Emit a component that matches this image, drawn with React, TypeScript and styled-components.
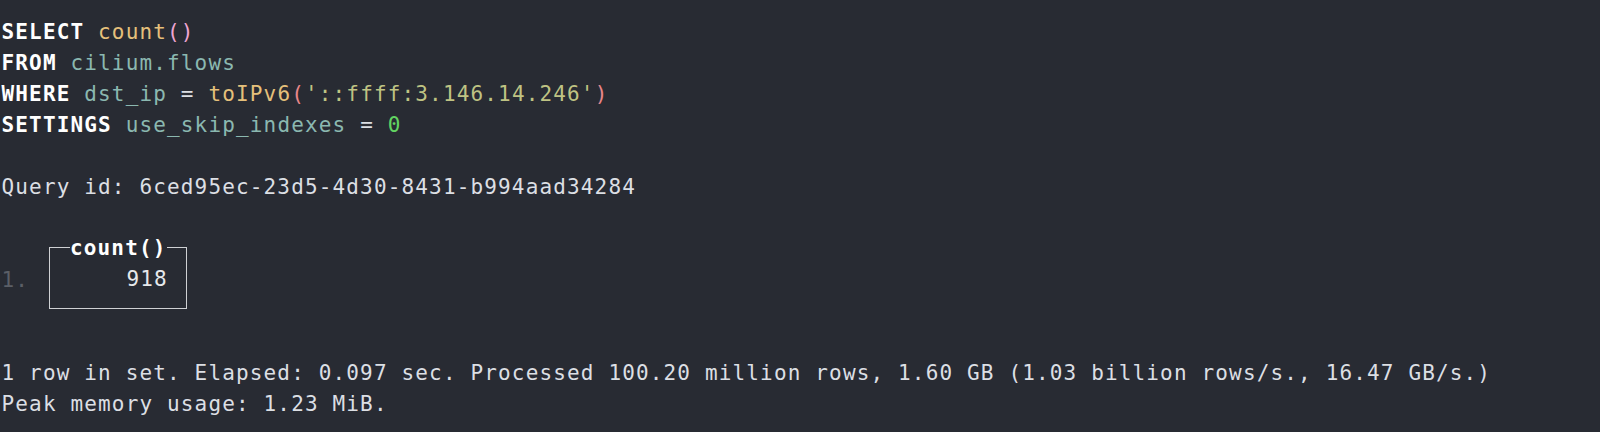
import React from "react";
import styled, { createGlobalStyle } from "styled-components";

const BG = "#282b33";
const CELL = 13.8;
const LINE = 31;

const Global = createGlobalStyle`
  html, body { margin: 0; padding: 0; background: ${BG}; }
  body { width: 1600px; height: 432px; overflow: hidden; }
`;

const Terminal = styled.div`
  box-sizing: border-box;
  width: 1600px;
  height: 432px;
  background: ${BG};
  padding: 16.5px 0 0 1.5px;
  font-family: "DejaVu Sans Mono", "Liberation Mono", monospace;
  font-size: 21px;
  letter-spacing: ${CELL - 12.65}px;
  color: #dcdfe4;
  display: flex;
  flex-direction: column;
`;

const Line = styled.div`
  height: ${LINE}px;
  line-height: ${LINE}px;
  white-space: pre;
`;

type Tone = "kw" | "fn" | "pink" | "red" | "id" | "str" | "num" | "plain" | "dim";

const toneColor: Record<Tone, string> = {
  kw: "#ffffff",
  fn: "#e5c07b",
  pink: "#eea5d2",
  red: "#e8868a",
  id: "#8bb8b0",
  str: "#bfc383",
  num: "#62d462",
  plain: "#dcdfe4",
  dim: "#5b5f67",
};

const Tok = styled.span<{ $tone: Tone }>`
  color: ${(p) => toneColor[p.$tone]};
  font-weight: ${(p) => (p.$tone === "kw" ? 700 : 400)};
`;

const Result = styled.div`
  display: grid;
  grid-template-columns: ${CELL * 3}px auto;
  grid-template-rows: repeat(3, ${LINE}px);
  justify-content: start;
`;

const RowNum = styled.div`
  grid-column: 1;
  grid-row: 2;
  line-height: ${LINE}px;
  color: #5b5f67;
  white-space: pre;
`;

const Box = styled.div`
  grid-column: 2;
  grid-row: 1 / span 3;
  align-self: start;
  box-sizing: border-box;
  width: ${CELL * 10}px;
  height: 62.5px;
  margin: 13.2px 0 0 ${CELL / 2 - 0.75}px;
  border: 1.5px solid #cfd1d4;
  display: flex;
  flex-direction: column;
`;

const BoxTitle = styled.div`
  align-self: flex-start;
  margin: -14.7px 0 0 ${CELL * 1.5 - 0.75}px;
  height: ${LINE}px;
  line-height: ${LINE}px;
  background: ${BG};
  color: #ffffff;
  font-weight: 700;
  white-space: pre;
`;

const BoxValue = styled.div`
  height: ${LINE}px;
  line-height: ${LINE}px;
  text-align: right;
  padding-right: ${CELL * 1.5 - 2.5}px;
  color: #e6e8eb;
  white-space: pre;
`;

export default function App() {
  return (
    <>
      <Global />
      <Terminal>
        <Line>
          <Tok $tone="kw">SELECT</Tok> <Tok $tone="fn">count</Tok>
          <Tok $tone="pink">()</Tok>
        </Line>
        <Line>
          <Tok $tone="kw">FROM</Tok> <Tok $tone="id">cilium.flows</Tok>
        </Line>
        <Line>
          <Tok $tone="kw">WHERE</Tok> <Tok $tone="id">dst_ip</Tok> = <Tok $tone="fn">toIPv6</Tok>
          <Tok $tone="red">(</Tok>
          <Tok $tone="str">'::ffff:3.146.14.246'</Tok>
          <Tok $tone="red">)</Tok>
        </Line>
        <Line>
          <Tok $tone="kw">SETTINGS</Tok> <Tok $tone="id">use_skip_indexes</Tok> ={" "}
          <Tok $tone="num">0</Tok>
        </Line>
        <Line />
        <Line>Query id: 6ced95ec-23d5-4d30-8431-b994aad34284</Line>
        <Line />
        <Result>
          <RowNum>1.</RowNum>
          <Box>
            <BoxTitle>count()</BoxTitle>
            <BoxValue>918</BoxValue>
          </Box>
        </Result>
        <Line />
        <Line>
          1 row in set. Elapsed: 0.097 sec. Processed 100.20 million rows, 1.60 GB (1.03 billion rows/s., 16.47 GB/s.)
        </Line>
        <Line>Peak memory usage: 1.23 MiB.</Line>
      </Terminal>
    </>
  );
}
